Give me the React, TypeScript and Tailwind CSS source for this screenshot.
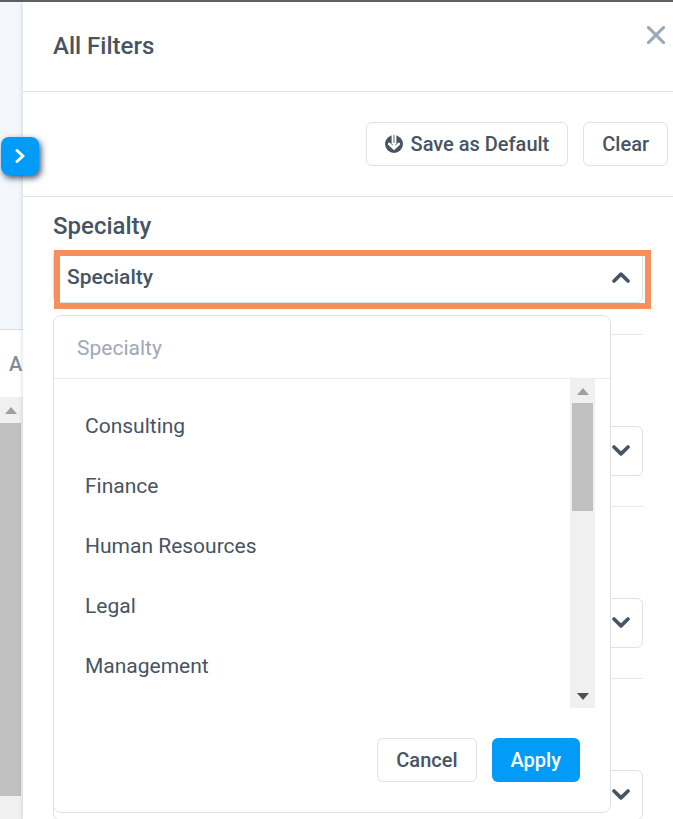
import React, { useState } from "react";
import clsx from "clsx";

const specialties = ["Consulting", "Finance", "Human Resources", "Legal", "Management"];

const Chevron = ({ className }: { className?: string }) => (
  <svg
    viewBox="0 0 18 12"
    className={clsx("h-3 w-[18px] shrink-0", className)}
    fill="none"
    stroke="currentColor"
    strokeWidth="3.6"
    strokeLinecap="round"
    strokeLinejoin="round"
    aria-hidden="true"
  >
    <path d="M2 2 9 8.9 16 2" />
  </svg>
);

const Triangle = ({ className }: { className?: string }) => (
  <svg viewBox="0 0 12 7" className={clsx("h-[7px] w-3", className)} fill="currentColor" aria-hidden="true">
    <path d="M0 7 6 0l6 7z" />
  </svg>
);

const SaveIcon = () => (
  <svg viewBox="0 0 18 18" className="h-[18px] w-[18px]" aria-hidden="true">
    <circle cx="9" cy="9" r="9" fill="currentColor" />
    <path d="M6.6 0h4.8v9H6.6z" fill="#fff" />
    <path d="M8 0h2v8H8z" fill="#a9b0b8" />
    <path d="M7.6 8h2.800v4H7.6z" fill="#fff" />
    <path d="M4.200 9 9 13.4 13.8 9" fill="none" stroke="#fff" strokeWidth="2.600" strokeLinecap="round" />
  </svg>
);

const OutlineButton = ({
  children,
  onClick,
}: {
  children: React.ReactNode;
  onClick?: () => void;
}) => (
  <button
    type="button"
    onClick={onClick}
    className="flex h-11 items-center gap-2 rounded-md border border-[#dfe1e4] bg-white px-[18px] text-xl font-medium"
  >
    {children}
  </button>
);

// Closed filter box followed by the divider of its section
const FilterSection = ({ label }: { label: string }) => (
  <section className="mx-[30px] border-b border-[#e6e7ea] pt-[91px] pb-[30px]">
    <button
      type="button"
      aria-label={label}
      className="flex h-[50px] w-full items-center justify-end rounded-md border border-[#dfe1e4] bg-white pr-3"
    >
      <Chevron />
    </button>
  </section>
);

const SpecialtyMenu = ({ onClose }: { onClose: () => void }) => {
  const [query, setQuery] = useState("");
  const shown = specialties.filter((s) => s.toLowerCase().includes(query.toLowerCase()));

  return (
    <div className="absolute top-[73px] right-8 left-0 z-10 rounded-lg border border-[#dfe3e6] bg-white">
      <input
        type="text"
        aria-label="Search specialty"
        placeholder="Specialty"
        value={query}
        onChange={(e) => setQuery(e.target.value)}
        className="block h-[63px] w-full rounded-t-lg border-b border-[#ebecee] px-[23px] pt-0.5 text-[21px] outline-none placeholder:text-[#9fa8b5]"
      />
      <div className="mr-[15px] flex h-[329px]">
        <ul className="flex-1 pt-[18px]">
          {shown.map((name) => (
            <li key={name}>
              <button type="button" className="block h-[60px] w-full px-[31px] text-left text-[21px]">
                {name}
              </button>
            </li>
          ))}
        </ul>
        <div className="flex w-[25px] flex-col items-center justify-between bg-[#f0f0f0]">
          <div className="flex w-full flex-col items-center">
            <div className="flex h-6 items-center text-[#a0a0a0]">
              <Triangle />
            </div>
            <div className="h-[108px] w-[21px] bg-[#c0c0c0]" />
          </div>
          <div className="flex h-6 items-center text-[#505050]">
            <Triangle className="rotate-180" />
          </div>
        </div>
      </div>
      <div className="flex justify-end gap-[15px] px-[30px] py-[30px]">
        <OutlineButton onClick={onClose}>Cancel</OutlineButton>
        <button
          type="button"
          onClick={onClose}
          className="h-11 rounded-md bg-[#039bf8] px-[19px] text-xl font-medium text-white"
        >
          Apply
        </button>
      </div>
    </div>
  );
};

// Sliver of the page that stays visible beside the drawer
const PageEdge = () => (
  <div className="flex w-[23px] shrink-0 flex-col overflow-hidden">
    <div className="h-[328px] shrink-0 border-b border-[#d9dfe5] bg-[#f3f7fb]" />
    <div className="flex h-[67px] shrink-0 items-center pl-[9px] text-xl font-medium text-[#7e8a99]">
      A
    </div>
    <div className="flex flex-1 flex-col bg-[#f0f0f0]">
      <div className="flex h-[26px] items-center pl-[5px] text-[#a0a0a0]">
        <Triangle />
      </div>
      <div className="mr-0.5 h-[373px] bg-[#c0c0c0]" />
    </div>
  </div>
);

export default function App() {
  const [open, setOpen] = useState(true);

  return (
    <div className="relative flex h-screen overflow-hidden border-t-2 border-[#605f64] bg-white font-['Roboto',sans-serif] text-[#475462]">
      <PageEdge />
      <main className="flex-1 bg-white shadow-[0_0_5px_rgba(0,0,0,0.16)]">
        <header className="flex h-[90px] items-start justify-between border-b border-[#dfe1e4] pr-2 pl-[30px]">
          <h1 className="pt-7 text-2xl leading-8 font-medium">All Filters</h1>
          <button type="button" aria-label="Close" className="pt-6 text-[#9aa8ba]">
            <svg
              viewBox="0 0 18 18"
              className="h-[18px] w-[18px]"
              fill="none"
              stroke="currentColor"
              strokeWidth="2.9"
              strokeLinecap="round"
            >
              <path d="M1.4 1.4l15.2 15.2M16.6 1.4 1.4 16.6" />
            </svg>
          </button>
        </header>

        <div className="flex justify-end gap-[15px] border-b border-[#dfe1e4] py-[30px] pr-[5px]">
          <OutlineButton>
            <SaveIcon />
            Save as Default
          </OutlineButton>
          <OutlineButton>Clear</OutlineButton>
        </div>

        <section className="mx-[30px] border-b border-[#e6e7ea] pt-[13px] pb-[31px]">
          <h2 className="text-2xl leading-8 font-medium">Specialty</h2>
          <div className="relative pt-2">
            <button
              type="button"
              aria-expanded={open}
              onClick={() => setOpen(!open)}
              className="flex h-[53px] w-full items-center justify-between rounded-md border border-[#dfe1e4] bg-white pr-3 pl-[13px]"
            >
              <span className="text-[21px] leading-6 font-medium">Specialty</span>
              <Chevron className={open ? "rotate-180" : ""} />
            </button>
            <div className="pointer-events-none absolute top-2 -right-2 left-px h-[59px] border-6 border-[#f68f5e]" />
            {open && <SpecialtyMenu onClose={() => setOpen(false)} />}
          </div>
        </section>

        <FilterSection label="Second filter" />
        <FilterSection label="Third filter" />
        <FilterSection label="Fourth filter" />
      </main>

      <button
        type="button"
        aria-label="Expand panel"
        className="absolute top-[135px] left-px flex h-[38px] w-[38px] items-center justify-center rounded-lg bg-[#039bf8] text-white shadow-[2px_3px_6px_rgba(30,50,80,0.85)]"
      >
        <svg
          viewBox="0 0 10 16"
          className="h-4 w-[10px]"
          fill="none"
          stroke="currentColor"
          strokeWidth="3"
          strokeLinecap="round"
          strokeLinejoin="round"
        >
          <path d="M2 2.5 8 8l-6 5.5" />
        </svg>
      </button>
    </div>
  );
}
